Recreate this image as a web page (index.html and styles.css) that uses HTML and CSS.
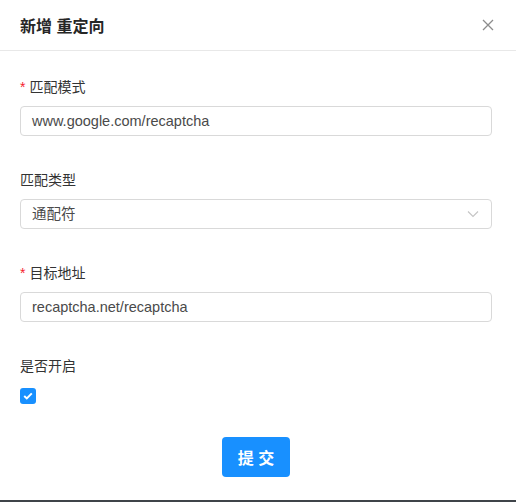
FILE: index.html
```html
<!DOCTYPE html>
<html lang="zh">
<head>
<meta charset="utf-8">
<title>新增 重定向</title>
<link rel="stylesheet" href="styles.css">
</head>
<body>
<div class="modal">
  <div class="modal-header">
    <div class="modal-title">新增 重定向</div>
    <svg class="close" width="12" height="12" viewBox="0 0 12 12"><path d="M1 1L11 11M11 1L1 11" stroke="#8c8c8c" stroke-width="1.3" fill="none"/></svg>
  </div>
  <div class="modal-body">
    <div class="form-item">
      <div class="label"><span class="req">*</span>匹配模式</div>
      <div class="input">www.google.com/recaptcha</div>
    </div>
    <div class="form-item">
      <div class="label">匹配类型</div>
      <div class="input select">
        <span>通配符</span>
        <svg width="12" height="8" viewBox="0 0 12 8"><path d="M1 1.5L6 6.5L11 1.5" stroke="#c4c4c4" stroke-width="1.1" fill="none"/></svg>
      </div>
    </div>
    <div class="form-item">
      <div class="label"><span class="req">*</span>目标地址</div>
      <div class="input">recaptcha.net/recaptcha</div>
    </div>
    <div class="form-item">
      <div class="label">是否开启</div>
      <div class="checkbox"><svg width="10" height="8" viewBox="0 0 10 8"><path d="M1.2 4L3.8 6.4L8.8 1.4" stroke="#fff" stroke-width="2" fill="none"/></svg></div>
    </div>
    <div class="actions">
      <button class="btn">提 交</button>
    </div>
  </div>
</div>
</body>
</html>
```
FILE: styles.css
```css
html, body {
  margin: 0;
  padding: 0;
  background: #fff;
}
body {
  font-family: "Liberation Sans", "Noto Sans CJK SC", sans-serif;
  color: #333;
}
.modal {
  height: 500px;
  border-bottom: 2px solid #3f4449;
  display: flex;
  flex-direction: column;
}
.modal-header {
  height: 50px;
  border-bottom: 1px solid #e8e8e8;
  display: flex;
  align-items: center;
  justify-content: space-between;
  padding: 0 22px 0 20px;
}
.modal-title {
  font-size: 16px;
  font-weight: 600;
  color: #262626;
}
.close {
  display: block;
}
.modal-body {
  padding: 25px 24px 0 20px;
}
.form-item {
  margin-bottom: 33px;
}
.label {
  font-size: 14px;
  line-height: 22px;
  height: 22px;
  margin-bottom: 8px;
  color: #333;
}
.req {
  color: #f5222d;
  margin-right: 4px;
  font-family: "Liberation Sans", sans-serif;
}
.input {
  box-sizing: border-box;
  height: 30px;
  border: 1px solid #d9d9d9;
  border-radius: 4px;
  padding: 0 11px;
  font-size: 14.5px;
  line-height: 28px;
  color: #4a4a4a;
}
.select {
  display: flex;
  align-items: center;
  justify-content: space-between;
  padding-right: 12px;
}
.select svg {
  display: block;
}
.checkbox {
  width: 16px;
  height: 16px;
  border-radius: 3px;
  background: #1890ff;
  display: flex;
  align-items: center;
  justify-content: center;
  margin-top: 11px;
}
.actions {
  display: flex;
  justify-content: center;
}
.btn {
  width: 68px;
  height: 40px;
  border: none;
  border-radius: 4px;
  background: #1890ff;
  color: #fff;
  font-family: "Liberation Sans", "Noto Sans CJK SC", sans-serif;
  font-size: 16px;
  font-weight: 700;
  padding: 0;
}
```
